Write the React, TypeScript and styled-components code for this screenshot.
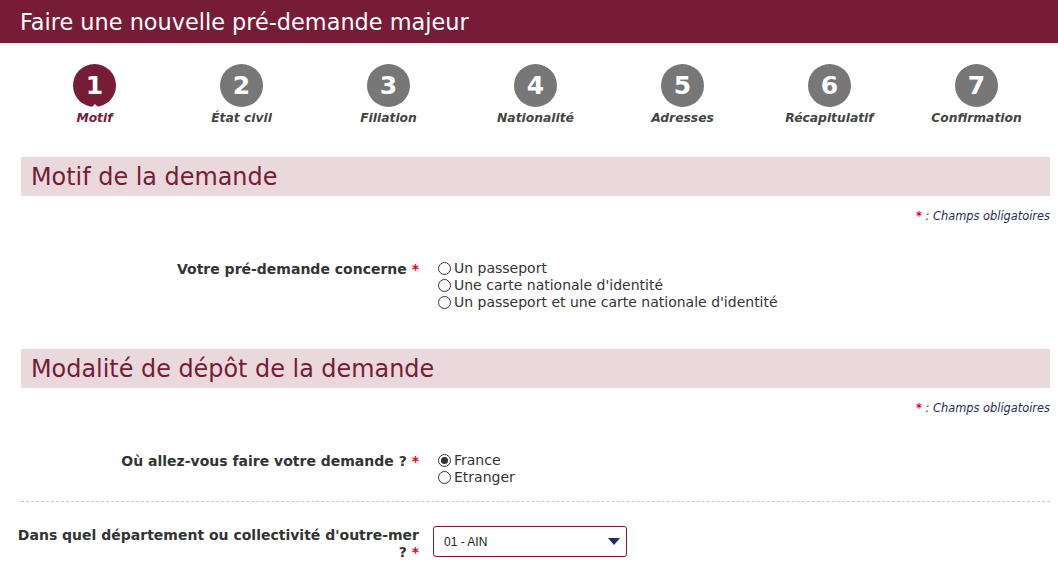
import React from "react";
import styled, { createGlobalStyle } from "styled-components";

const Global = createGlobalStyle`
  html, body { margin: 0; padding: 0; background: #fff; }
  body { font-family: "DejaVu Sans", Verdana, sans-serif; color: #333; }
  * { box-sizing: border-box; }
`;

const MAROON = "#761c37";

const Page = styled.div`
  width: 1058px;
  height: 567px;
  overflow: hidden;
`;

const Header = styled.header`
  height: 43px;
  background: ${MAROON};
  display: flex;
  align-items: center;
  padding-left: 20px;
`;

const Title = styled.h1`
  margin: 0;
  font-size: 22.4px;
  font-weight: normal;
  color: #fff;
`;

const Content = styled.main`
  padding: 0 8px 0 21px;
`;

const Steps = styled.ol`
  list-style: none;
  margin: 0;
  padding: 21px 0 0 0;
  display: grid;
  grid-template-columns: repeat(7, 1fr);
  height: 114px;
`;

const Step = styled.li`
  display: flex;
  flex-direction: column;
  align-items: center;
`;

const Circle = styled.div<{ $active?: boolean }>`
  position: relative;
  width: 43px;
  height: 43px;
  border-radius: 50%;
  background: ${(p) => (p.$active ? MAROON : "#777")};
  color: #fff;
  display: flex;
  align-items: center;
  justify-content: center;
  font-size: 25px;
  font-weight: bold;
`;

const Notch = styled.span`
  position: absolute;
  bottom: -1px;
  left: 50%;
  margin-left: -4px;
  width: 0;
  height: 0;
  border-left: 4px solid transparent;
  border-right: 4px solid transparent;
  border-bottom: 4px solid #fff;
`;

const StepLabel = styled.span<{ $active?: boolean }>`
  margin-top: 4px;
  font-size: 12.3px;
  font-weight: bold;
  font-style: italic;
  color: ${(p) => (p.$active ? MAROON : "#444")};
`;

const SectionTitle = styled.h2`
  margin: 0;
  height: 39px;
  background: #ead9dc;
  color: ${MAROON};
  font-size: 23.9px;
  font-weight: normal;
  display: flex;
  align-items: center;
  padding-left: 10px;
`;

const Required = styled.p`
  margin: 0;
  text-align: right;
  font-size: 11.4px;
  font-style: italic;
  color: #1f2d5a;
  padding-top: 13px;
  height: 64px;
`;

const Star = styled.span`
  color: #e3001b;
  font-style: normal;
  font-weight: bold;
`;

const NoWrap = styled.span`
  white-space: nowrap;
`;

const Row = styled.div`
  display: grid;
  grid-template-columns: 412px 1fr;
  column-gap: 19px;
  align-items: start;
  margin-left: -14px;
`;

const Label = styled.div`
  text-align: right;
  font-size: 14px;
  font-weight: bold;
  color: #333;
  line-height: 17px;
  padding-top: 1px;
`;

const Options = styled.div`
  display: flex;
  flex-direction: column;
`;

const Option = styled.label`
  display: flex;
  align-items: center;
  font-size: 14px;
  line-height: 17px;
  color: #333;
`;

const RadioDot = styled.span<{ $checked?: boolean }>`
  width: 13px;
  height: 13px;
  border-radius: 50%;
  border: 1px solid #333;
  margin-right: 3px;
  display: inline-flex;
  align-items: center;
  justify-content: center;
  &::after {
    content: "";
    display: ${(p) => (p.$checked ? "block" : "none")};
    width: 7px;
    height: 7px;
    border-radius: 50%;
    background: #333;
  }
`;

const Spacer = styled.div<{ $h: number }>`
  height: ${(p) => p.$h}px;
`;

const Divider = styled.hr`
  margin: 0;
  border: 0;
  border-top: 1px dashed #c8c8c8;
`;

const SelectBox = styled.div`
  width: 194px;
  height: 31px;
  margin-left: -5px;
  border: 1px solid ${MAROON};
  border-radius: 3px;
  display: flex;
  align-items: center;
  justify-content: space-between;
  padding: 0 6px 0 10px;
  font-family: "Liberation Sans", Arial, sans-serif;
  font-size: 12px;
  color: #222;
`;

const Caret = styled.span`
  width: 0;
  height: 0;
  border-left: 6px solid transparent;
  border-right: 6px solid transparent;
  border-top: 7px solid #1f2d5a;
`;

const steps = [
  "Motif",
  "État civil",
  "Filiation",
  "Nationalité",
  "Adresses",
  "Récapitulatif",
  "Confirmation",
];

export default function App() {
  return (
    <Page>
      <Global />
      <Header>
        <Title>Faire une nouvelle pré-demande majeur</Title>
      </Header>
      <Content>
        <Steps>
          {steps.map((s, i) => (
            <Step key={s}>
              <Circle $active={i === 0}>
                {i + 1}
                {i === 0 && <Notch />}
              </Circle>
              <StepLabel $active={i === 0}>{s}</StepLabel>
            </Step>
          ))}
        </Steps>

        <SectionTitle>Motif de la demande</SectionTitle>
        <Required>
          <Star>*</Star> : Champs obligatoires
        </Required>
        <Row>
          <Label>
            Votre pré-demande concerne <Star>*</Star>
          </Label>
          <Options>
            <Option>
              <RadioDot />
              Un passeport
            </Option>
            <Option>
              <RadioDot />
              Une carte nationale d'identité
            </Option>
            <Option>
              <RadioDot />
              Un passeport et une carte nationale d'identité
            </Option>
          </Options>
        </Row>
        <Spacer $h={38} />

        <SectionTitle>Modalité de dépôt de la demande</SectionTitle>
        <Required>
          <Star>*</Star> : Champs obligatoires
        </Required>
        <Row>
          <Label>
            Où allez-vous faire votre demande ? <Star>*</Star>
          </Label>
          <Options>
            <Option>
              <RadioDot $checked />
              France
            </Option>
            <Option>
              <RadioDot />
              Etranger
            </Option>
          </Options>
        </Row>
        <Spacer $h={15} />
        <Divider />
        <Spacer $h={24} />
        <Row>
          <Label>
            Dans quel département ou collectivité <NoWrap>d'outre-mer</NoWrap> ? <Star>*</Star>
          </Label>
          <SelectBox>
            01 - AIN
            <Caret />
          </SelectBox>
        </Row>
      </Content>
    </Page>
  );
}
